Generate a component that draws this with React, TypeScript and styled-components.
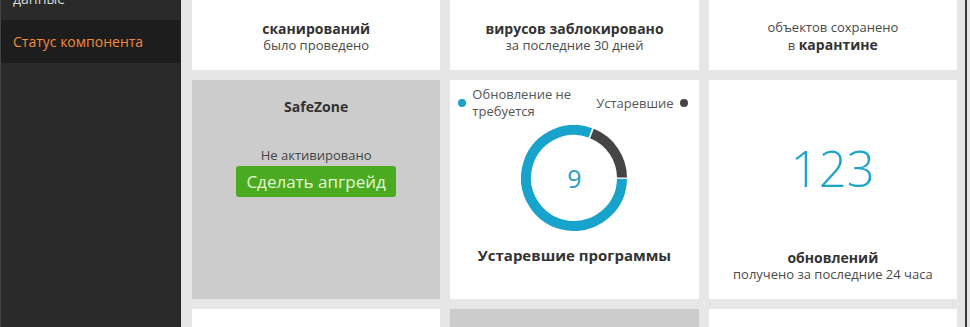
import React from "react";
import styled, { createGlobalStyle } from "styled-components";

const Global = createGlobalStyle`
  html, body { margin: 0; padding: 0; }
  body { font-family: "Open Sans", "Liberation Sans", sans-serif; background: #e6e6e6; }
  * { box-sizing: border-box; }
`;

const Shell = styled.div`
  display: flex;
  width: 970px;
  height: 327px;
  overflow: hidden;
`;

const Sidebar = styled.nav`
  width: 181px;
  flex: none;
  background: #2a2a2a;
  border-left: 1px solid #444;
  border-right: 1px solid #232323;
  overflow: hidden;
`;

const NavList = styled.ul`
  list-style: none;
  margin: -42px 0 0;
  padding: 0;
`;

const NavItem = styled.li<{ $active?: boolean }>`
  padding: 12px 12px;
  font-size: 14px;
  line-height: 19px;
  color: ${(p) => (p.$active ? "#f08a3c" : "#d8d8d8")};
  background: ${(p) => (p.$active ? "#1d1d1d" : "transparent")};
`;

const Main = styled.main`
  flex: 1;
  background: #e6e6e6;
  padding: 0 8px 0 11px;
  border-right: 2px solid #3b3b3b;
`;

const FrameEdge = styled.div`
  width: 3px;
  flex: none;
  background: #e4e4e4;
`;

const Grid = styled.div`
  display: grid;
  grid-template-columns: repeat(3, 1fr);
  grid-template-rows: 70px 219px 219px;
  gap: 10px;
`;

const Card = styled.section<{ $muted?: boolean; $align?: string }>`
  background: ${(p) => (p.$muted ? "#cccccc" : "#ffffff")};
  display: flex;
  flex-direction: column;
  align-items: center;
  justify-content: ${(p) => p.$align || "flex-start"};
  text-align: center;
  color: #444;
  position: relative;
`;

const StatFoot = styled.div`
  padding-bottom: 16px;
  display: flex;
  flex-direction: column;
  align-items: center;
`;

const Strong = styled.div`
  font-size: 14px;
  line-height: 17px;
  font-weight: 700;
  color: #333;
`;

const Sub = styled.div`
  font-size: 13px;
  line-height: 17px;
  color: #4a4a4a;
`;

const B = styled.b`
  font-size: 14px;
  font-weight: 700;
  color: #333;
`;

const Title = styled.div`
  margin-top: 18px;
  font-size: 14px;
  line-height: 17px;
  font-weight: 700;
  color: #333;
`;

const Status = styled.div`
  margin-top: 32px;
  font-size: 13px;
  line-height: 17px;
  color: #444;
`;

const UpgradeButton = styled.button`
  margin-top: 2px;
  width: 160px;
  height: 31px;
  border: none;
  border-radius: 3px;
  background: #4aab20;
  color: #e4f6d6;
  font-family: "Open Sans", "Liberation Sans", sans-serif;
  font-size: 17px;
  line-height: 31px;
  padding: 0;
  cursor: pointer;
`;

const Legend = styled.div`
  align-self: stretch;
  display: flex;
  justify-content: space-between;
  align-items: center;
  padding: 6px 11px 0 8px;
`;

const LegendItem = styled.div`
  display: flex;
  align-items: center;
  gap: 6px;
  font-size: 13px;
  line-height: 17px;
  color: #555;
  text-align: left;
`;

const Dot = styled.span<{ $color: string }>`
  width: 8px;
  height: 8px;
  border-radius: 50%;
  background: ${(p) => p.$color};
  flex: none;
`;

const DonutWrap = styled.div`
  margin-top: 5px;
  width: 106px;
  height: 106px;
  position: relative;
`;

const DonutValue = styled.div`
  position: absolute;
  inset: 0;
  display: flex;
  align-items: center;
  justify-content: center;
  font-size: 25px;
  font-weight: 400;
  color: #2a9ec0;
`;

const ChartTitle = styled.div`
  margin-top: 15px;
  font-size: 15px;
  line-height: 19px;
  font-weight: 700;
  color: #333;
`;

const BigNumber = styled.div`
  margin-top: 58px;
  font-size: 49px;
  line-height: 60px;
  font-weight: 300;
  color: #1ea4cb;
`;

const NumberFoot = styled.div`
  margin-top: auto;
  padding-bottom: 16px;
  display: flex;
  flex-direction: column;
  align-items: center;
`;

const CYAN = "#18a3cc";
const DARK = "#454545";

function pt(cx: number, cy: number, r: number, deg: number) {
  const a = (deg * Math.PI) / 180;
  return [cx + r * Math.sin(a), cy - r * Math.cos(a)];
}

function arc(cx: number, cy: number, r: number, a0: number, a1: number) {
  const [x0, y0] = pt(cx, cy, r, a0);
  const [x1, y1] = pt(cx, cy, r, a1);
  const large = a1 - a0 > 180 ? 1 : 0;
  return `M ${x0.toFixed(2)} ${y0.toFixed(2)} A ${r} ${r} 0 ${large} 1 ${x1.toFixed(2)} ${y1.toFixed(2)}`;
}

function Donut({ value }: { value: number }) {
  return (
    <DonutWrap>
      <svg width="106" height="106" viewBox="0 0 106 106">
        <path d={arc(53, 53, 48, 91, 380)} fill="none" stroke={CYAN} strokeWidth="10" />
        <path d={arc(53, 53, 48, 22, 89.5)} fill="none" stroke={DARK} strokeWidth="10" />
      </svg>
      <DonutValue>{value}</DonutValue>
    </DonutWrap>
  );
}

export default function App() {
  return (
    <>
      <Global />
      <Shell>
        <Sidebar>
          <NavList>
            <NavItem>
              Защищенные
              <br />
              данные
            </NavItem>
            <NavItem $active>Статус компонента</NavItem>
          </NavList>
        </Sidebar>
        <Main>
          <Grid>
            <Card $align="flex-end">
              <StatFoot>
                <Strong>сканирований</Strong>
                <Sub>было проведено</Sub>
              </StatFoot>
            </Card>
            <Card $align="flex-end">
              <StatFoot>
                <Strong>вирусов заблокировано</Strong>
                <Sub>за последние 30 дней</Sub>
              </StatFoot>
            </Card>
            <Card $align="flex-end">
              <StatFoot>
                <Sub>объектов сохранено</Sub>
                <Sub>
                  в <B>карантине</B>
                </Sub>
              </StatFoot>
            </Card>

            <Card $muted>
              <Title>SafeZone</Title>
              <Status>Не активировано</Status>
              <UpgradeButton>Сделать апгрейд</UpgradeButton>
            </Card>
            <Card>
              <Legend>
                <LegendItem>
                  <Dot $color={CYAN} />
                  <span>
                    Обновление не
                    <br />
                    требуется
                  </span>
                </LegendItem>
                <LegendItem>
                  <span>Устаревшие</span>
                  <Dot $color={DARK} />
                </LegendItem>
              </Legend>
              <Donut value={9} />
              <ChartTitle>Устаревшие программы</ChartTitle>
            </Card>
            <Card>
              <BigNumber>123</BigNumber>
              <NumberFoot>
                <Strong>обновлений</Strong>
                <Sub>получено за последние 24 часа</Sub>
              </NumberFoot>
            </Card>

            <Card />
            <Card $muted />
            <Card />
          </Grid>
        </Main>
        <FrameEdge />
      </Shell>
    </>
  );
}
